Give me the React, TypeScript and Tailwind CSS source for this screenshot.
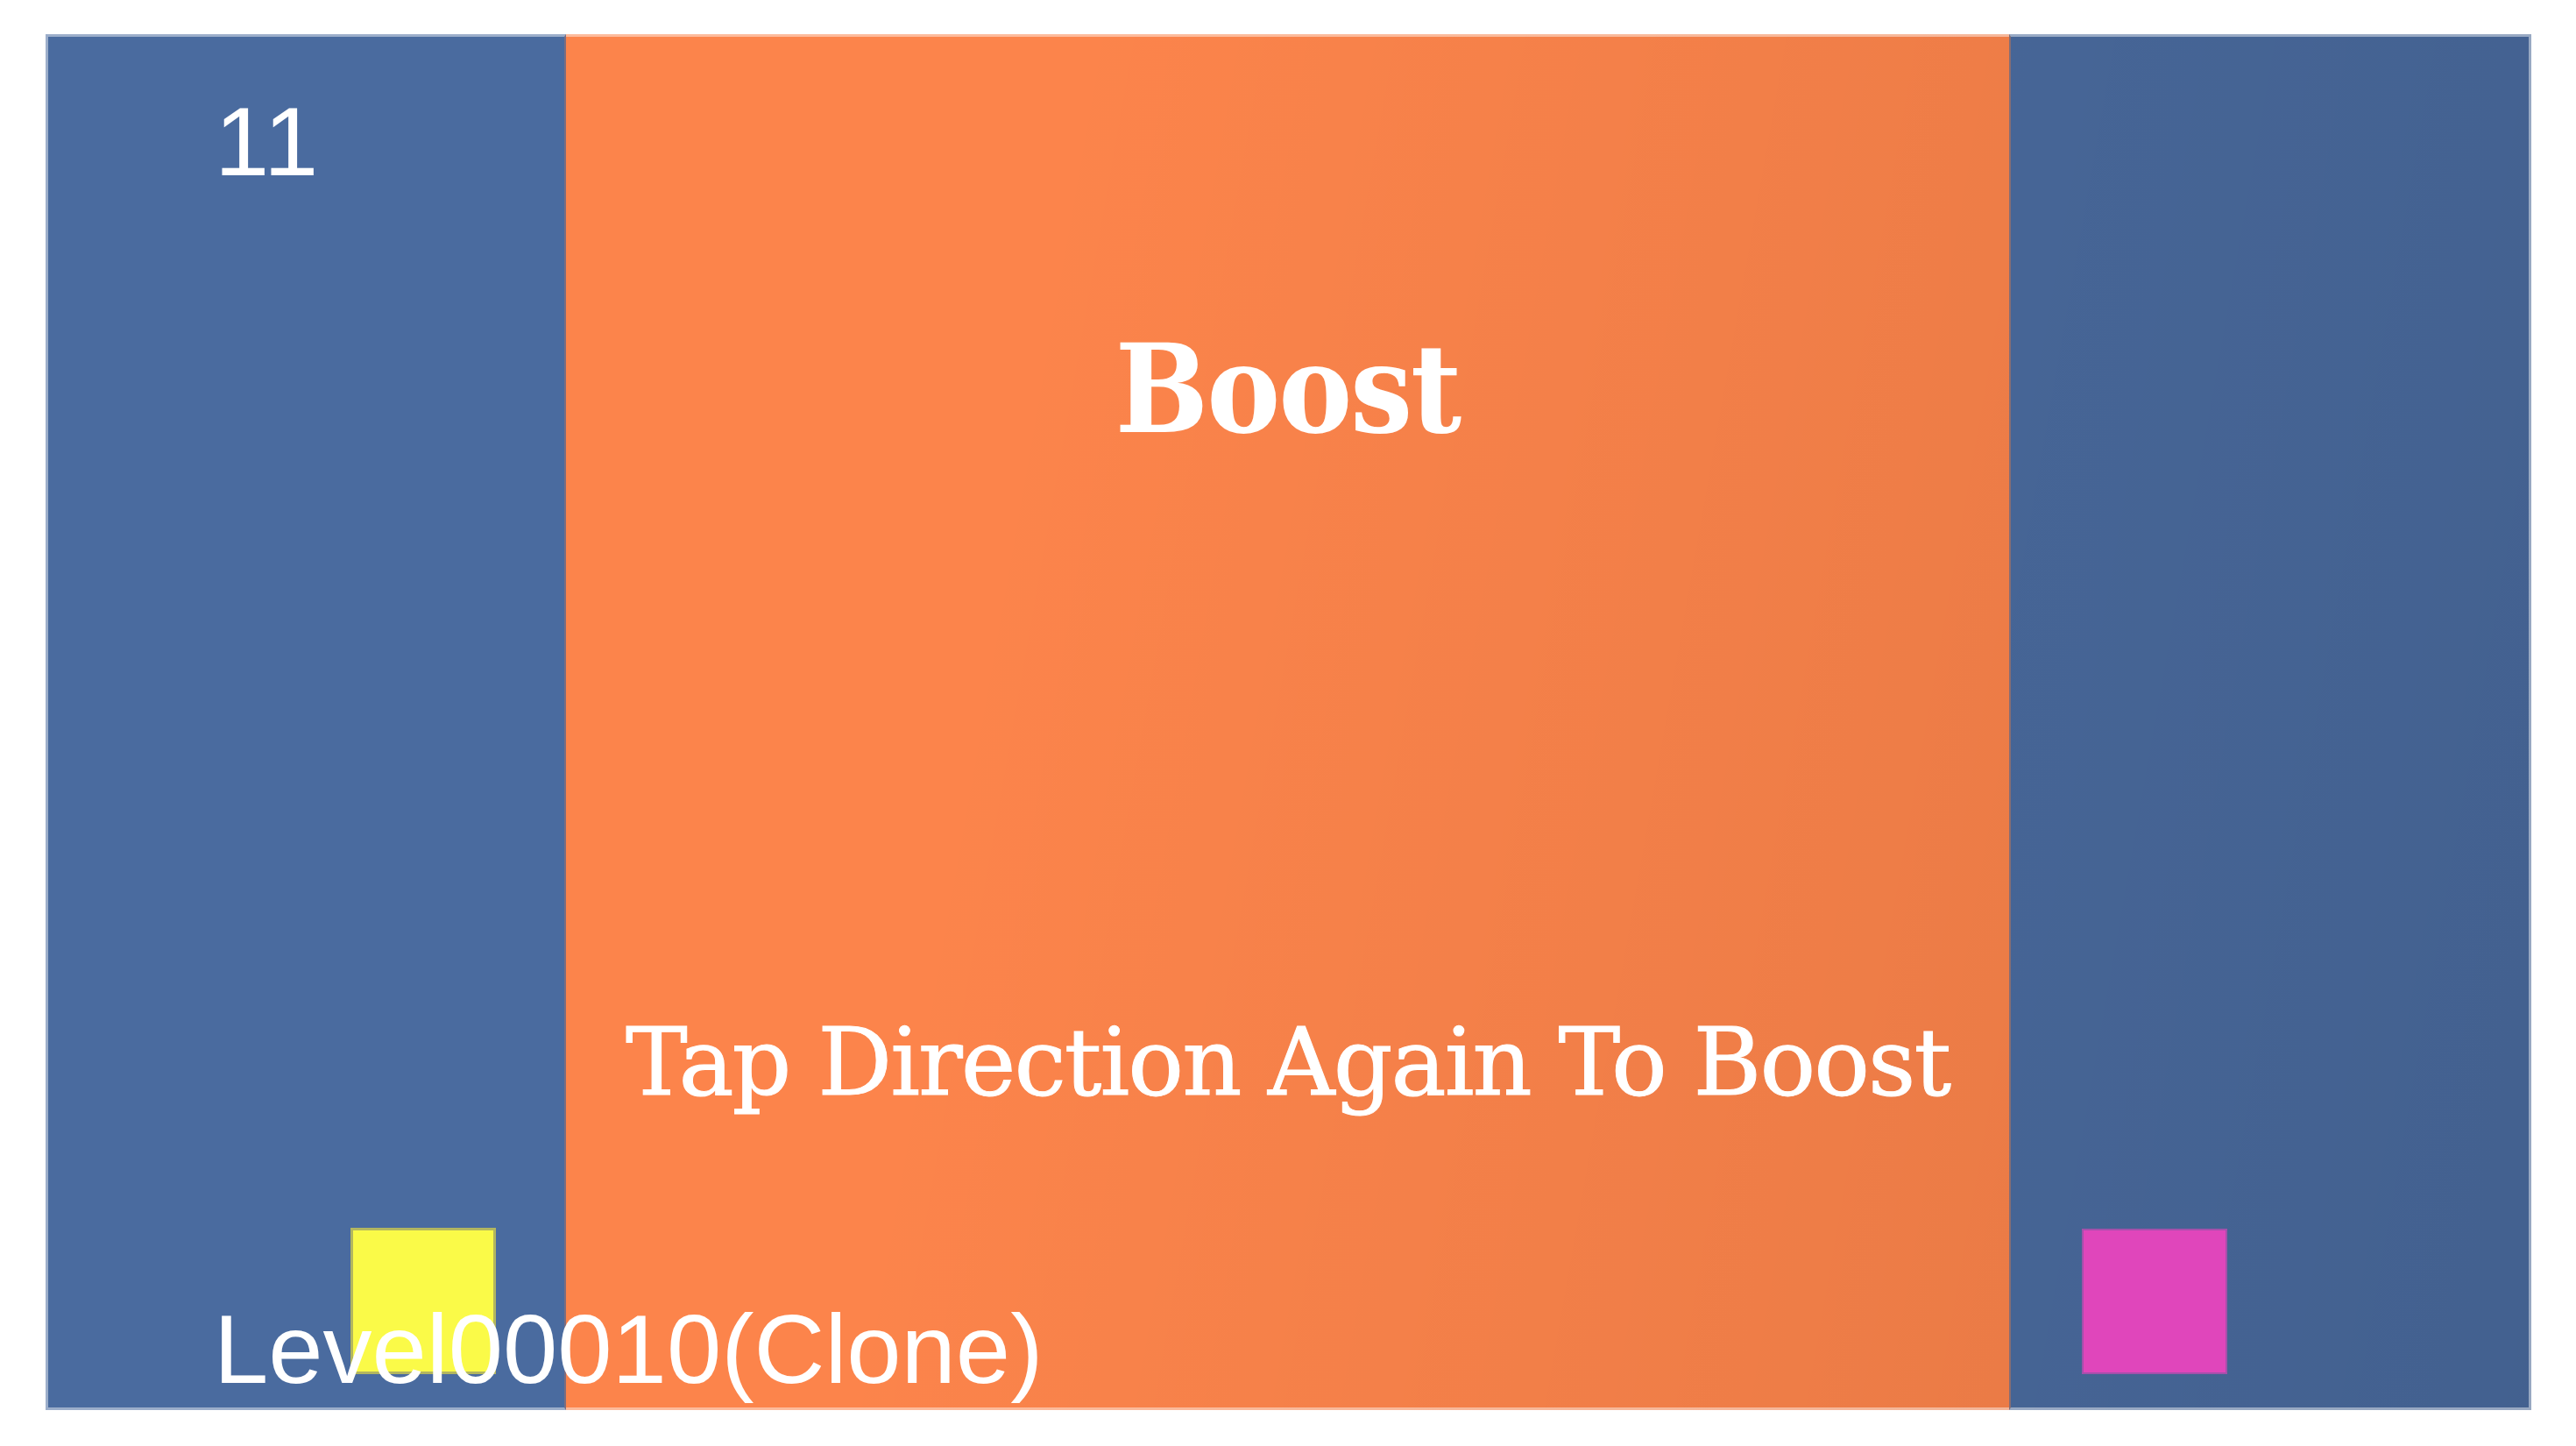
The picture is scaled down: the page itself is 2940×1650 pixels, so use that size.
const panelShade =
  "bg-fixed bg-[linear-gradient(100deg,rgba(0,0,0,0)_38%,rgba(0,0,0,0.1)_100%)]";

export default function App(): React.JSX.Element {
  return (
    <div className="min-h-[1650px] w-[2940px] bg-white pl-[52px] pt-[39px]">
      <div className="relative flex h-[1570px] w-[2837px] overflow-hidden">
        {/* left lane */}
        <div
          className={`w-[594px] shrink-0 border-y-[3px] border-l-[3px] border-r-2 border-y-white/45 border-l-white/45 border-r-[#7c6d80] bg-[#4a6b9f] ${panelShade}`}
        />

        {/* middle lane */}
        <div
          className={`flex w-[1647px] shrink-0 flex-col items-center border-y-[3px] border-white/45 bg-[#fc844b] pt-[332px] text-white ${panelShade}`}
        >
          <h1 className="font-['DejaVu_Serif_Condensed','DejaVu_Serif',serif] text-[140px] font-bold leading-none tracking-[-2px]">
            Boost
          </h1>
          <p className="mt-[646px] font-['DejaVu_Serif',serif] text-[106px] leading-none tracking-[-2px] [-webkit-text-stroke:1px_white]">
            Tap Direction Again To Boost
          </p>
        </div>

        {/* right lane */}
        <div
          className={`w-[596px] shrink-0 border-y-[3px] border-l-2 border-r-[3px] border-y-white/45 border-r-white/45 border-l-[#866d74] bg-[#4a6b9f] ${panelShade}`}
        />

        {/* game objects */}
        <div className="absolute left-[348px] top-[1362px] h-[167px] w-[166px] border-[3px] border-[#b3b65f] bg-[#fafa48]" />
        <div className="absolute left-[2324px] top-[1363px] h-[166px] w-[166px] border-2 border-[#a450ab] bg-[#e046bb]" />

        <span className="absolute left-[193px] top-[67px] font-['Liberation_Sans',Arial,sans-serif] text-[112px] leading-none tracking-[2px] text-white">
          11
        </span>
        <span className="absolute left-[192px] top-[1445px] font-['Liberation_Sans',Arial,sans-serif] text-[112px] leading-none text-white">
          Level00010(Clone)
        </span>
      </div>
    </div>
  );
}
